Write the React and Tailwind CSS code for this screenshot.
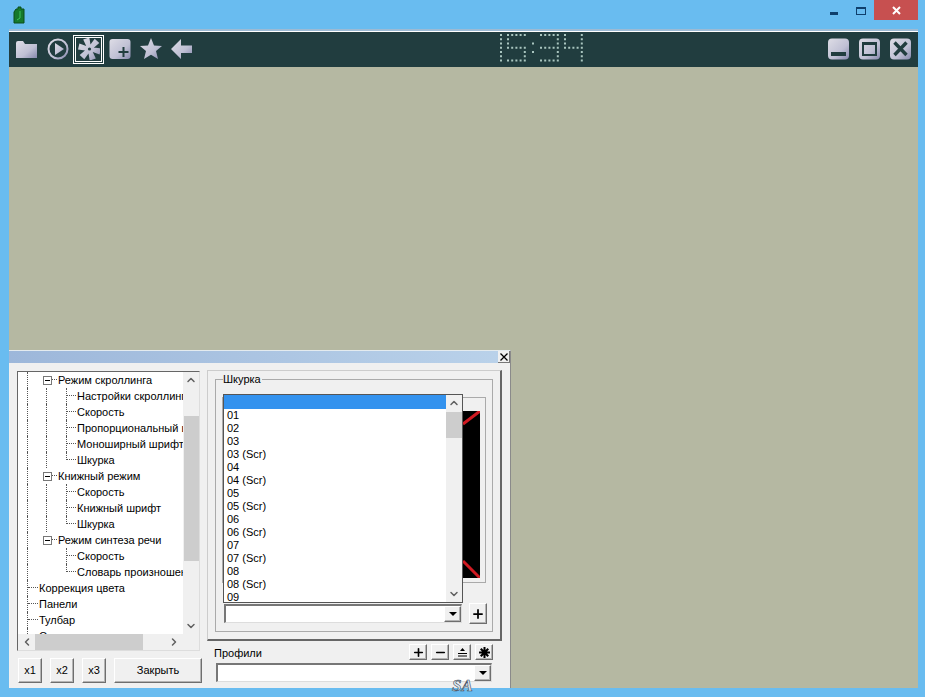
import React from 'react';
import { ChevronUp, ChevronDown, ChevronLeft, ChevronRight, Plus, Minus } from 'lucide-react';

const digitMaps = {
  1: ['1', '1', '1', '1', '1', '1', '1'],
  5: ['11111', '10000', '10000', '11111', '00001', '00001', '11111'],
  3: ['11111', '00001', '00001', '11111', '00001', '00001', '11111'],
  4: ['10001', '10001', '10001', '11111', '00001', '00001', '00001'],
};

const Digit = ({ x, map }) =>
  map.flatMap((row, r) =>
    row.split('').map((c, i) =>
      c === '1' ? <rect key={`${x}-${r}-${i}`} x={x + i * 4.2} y={r * 4.25} width="2" height="2" fill="#a9c5bf" /> : null
    )
  );

const Clock = () => (
  <svg width="90" height="30" viewBox="0 0 90 30" aria-label="15:34" className="ml-[306px] shrink-0">
    <Digit x={1} map={digitMaps[1]} />
    <Digit x={8} map={digitMaps[5]} />
    <rect x="33" y="8.5" width="2" height="2" fill="#a9c5bf" />
    <rect x="33" y="17" width="2" height="2" fill="#a9c5bf" />
    <Digit x={41} map={digitMaps[3]} />
    <Digit x={65} map={digitMaps[4]} />
  </svg>
);

// pinwheel with six slanted blades
const gearPath = (() => {
  const pts = [];
  for (let i = 0; i < 6; i++) {
    const a = ((i * 60 + 14) * Math.PI) / 180;
    const at = (r, d) => `${(11.5 + r * Math.cos(a + d)).toFixed(1)} ${(11 + r * Math.sin(a + d)).toFixed(1)}`;
    pts.push(at(4.5, -0.55), at(11.5, -0.3), at(11.5, 0.26), at(4.5, 0.5));
  }
  return `M${pts.join(' L')} Z`;
})();

const Grad = ({ id }) => (
  <defs>
    <linearGradient id={id} x1="0" y1="0" x2="1" y2="1">
      <stop offset="0" stopColor="#dedde6" />
      <stop offset="0.6" stopColor="#bfc0d4" />
      <stop offset="1" stopColor="#8688ad" />
    </linearGradient>
  </defs>
);

const ToolIcon = ({ id, children, className = '' }) => (
  <svg width="22" height="22" viewBox="0 0 22 22" className={`shrink-0 ${className}`}>
    <Grad id={id} />
    {children}
  </svg>
);

const Raised = ({ className = '', children }) => (
  <div className={`flex items-center justify-center bg-[#f0f0f0] border-r border-b border-[#6e6e6e] border-t border-l border-t-white border-l-white shadow-[inset_-1px_-1px_0_#b4b4b4] text-[11px] text-black ${className}`}>
    {children}
  </div>
);

const Caret = () => (
  <span className="w-0 h-0 border-l-[4px] border-r-[4px] border-t-[4px] border-l-transparent border-r-transparent border-t-black" />
);

const treeRows = [
  { t: 'Режим скроллинга', k: 'parent', g: true },
  { t: 'Настройки скроллинга', k: 'child', g: true },
  { t: 'Скорость', k: 'child', g: true },
  { t: 'Пропорциональный шрифт', k: 'child', g: true },
  { t: 'Моноширный шрифт', k: 'child', g: true },
  { t: 'Шкурка', k: 'last', g: true },
  { t: 'Книжный режим', k: 'parent', g: true },
  { t: 'Скорость', k: 'child', g: true },
  { t: 'Книжный шрифт', k: 'child', g: true },
  { t: 'Шкурка', k: 'last', g: true },
  { t: 'Режим синтеза речи', k: 'parent', g: true },
  { t: 'Скорость', k: 'child', g: false },
  { t: 'Словарь произношения', k: 'last', g: false },
  { t: 'Коррекция цвета', k: 'root' },
  { t: 'Панели', k: 'root' },
  { t: 'Тулбар', k: 'root' },
  { t: 'Статус', k: 'root' },
];

const DOT = 'border-dotted border-[#555]';

const TreeRow = ({ row }) => {
  if (row.k === 'root') {
    return (
      <div className="flex h-4 pl-[9px] items-start">
        <div className={`w-[11px] h-4 border-l ${DOT} shrink-0`}>
          <div className={`h-2 border-b ${DOT}`} />
        </div>
        <span className="pl-px whitespace-nowrap leading-4">{row.t}</span>
      </div>
    );
  }
  if (row.k === 'parent') {
    return (
      <div className="flex h-4 pl-[9px] items-start">
        <div className={`w-4 h-4 border-l ${DOT} shrink-0`} />
        <div className="w-[9px] h-4 shrink-0 flex items-center">
          <div className="w-[9px] h-[9px] border border-[#777] bg-white flex items-center justify-center">
            <div className="w-[5px] h-px bg-black" />
          </div>
        </div>
        <div className={`w-[5px] h-2 border-b ${DOT} shrink-0`} />
        <span className="pl-px whitespace-nowrap leading-4">{row.t}</span>
      </div>
    );
  }
  return (
    <div className="flex h-4 pl-[9px] items-start">
      <div className={`w-[19px] h-4 border-l ${DOT} shrink-0`} />
      <div className={`w-5 h-4 shrink-0 ${row.g ? `border-l ${DOT}` : ''}`} />
      <div className={`w-[10px] shrink-0 border-l ${DOT} ${row.k === 'last' ? 'h-2' : 'h-4'}`}>
        <div className={`h-2 border-b ${DOT}`} />
      </div>
      <span className="pl-px whitespace-nowrap leading-4">{row.t}</span>
    </div>
  );
};

const items = ['01', '02', '03', '03 (Scr)', '04', '04 (Scr)', '05', '05 (Scr)', '06', '06 (Scr)', '07', '07 (Scr)', '08', '08 (Scr)', '09'];

const Combo = ({ className = '' }) => (
  <div className={`flex bg-white border-t-2 border-l-2 border-[#777] border-b border-r border-b-[#ddd] border-r-[#ddd] ${className}`}>
    <div className="flex-1" />
    <Raised className="w-[17px] h-full">
      <Caret />
    </Raised>
  </div>
);

export default function App() {
  return (
    <div className="w-[925px] h-[697px] bg-[#69bcf0] flex flex-col overflow-hidden font-['Liberation_Sans',Arial,sans-serif]">
      {/* title bar */}
      <div className="h-[29px] flex items-start shrink-0">
        <svg width="12" height="18" viewBox="0 0 12 18" className="ml-[13px] mt-[6px]">
          <path d="M3 3 L5 3 L5 1 L8 1 L8 3 L11 3 L11 17 L1 17 L1 6 Z" fill="#16792c" stroke="#0b4f1a" />
          <path d="M7 5 L7 12 L4 14" fill="none" stroke="#3fc45c" />
        </svg>
        <div className="flex-1" />
        <div className="w-2 h-[3px] bg-[#0f3f6c] mt-[12px] mr-[18px]" />
        <div className="w-[10px] h-[8px] border border-t-2 border-[#0f3f6c] mt-[7px] mr-[8px]" />
        <div className="w-[44px] h-5 bg-[#c75050] flex items-center justify-center mr-[7px]">
          <svg width="9" height="9" viewBox="0 0 9 9">
            <path d="M1 1 L8 8 M8 1 L1 8" stroke="#fff" strokeWidth="2" />
          </svg>
        </div>
      </div>

      {/* client */}
      <div className="flex-1 flex flex-col ml-[9px] mr-[7px] mb-[9px] min-h-0 border-t-2 border-[#9dbad3]">
        <div className="h-px bg-white shrink-0" />
        <div className="h-[35px] bg-[#213d3f] flex items-center pl-[7px] pb-px shrink-0">
          <ToolIcon id="g1">
            <path d="M0 5 Q0 3 2 3 L7 3 L9 6 L21 6 L21 20 L0 20 Z" fill="url(#g1)" />
          </ToolIcon>
          <ToolIcon id="g2" className="ml-[9px]">
            <circle cx="11" cy="11" r="9.5" fill="none" stroke="url(#g2)" strokeWidth="2" />
            <path d="M8 5 L17 11 L8 17 Z" fill="url(#g2)" />
          </ToolIcon>
          <div className="ml-[4px] w-[31px] h-[29px] border border-white flex items-center justify-center shrink-0">
            <div className="w-[27px] h-[25px] border border-white flex items-center justify-center">
              <ToolIcon id="g3">
                <path d={gearPath} fill="url(#g3)" />
                <circle cx="11.5" cy="11" r="1.6" fill="#213d3f" />
              </ToolIcon>
            </div>
          </div>
          <ToolIcon id="g4" className="ml-[5px]">
            <rect x="0.5" y="1" width="21" height="20" rx="3" fill="url(#g4)" />
            <path d="M14.5 9 V19 M9.5 14 H19.5" stroke="#213d3f" strokeWidth="2" />
          </ToolIcon>
          <ToolIcon id="g5" className="ml-[9px]">
            <path d="M11 0 L14 7.5 L22 8 L16 13 L18 21 L11 16.8 L4 21 L6 13 L0 8 L8 7.5 Z" fill="url(#g5)" />
          </ToolIcon>
          <ToolIcon id="g6" className="ml-[9px]">
            <path d="M0 11 L10 1 L10 7.5 L21 7.5 L21 15 L10 15 L10 21 Z" fill="url(#g6)" />
          </ToolIcon>
          <Clock />
          <div className="flex-1" />
          <ToolIcon id="g7">
            <rect x="0" y="0.5" width="21" height="21" rx="4" fill="url(#g7)" />
            <rect x="3" y="14" width="15" height="4" fill="#213d3f" />
          </ToolIcon>
          <ToolIcon id="g8" className="ml-[9px]">
            <rect x="0" y="0.5" width="21" height="21" rx="4" fill="url(#g8)" />
            <rect x="4" y="5" width="13" height="12" fill="none" stroke="#213d3f" strokeWidth="2" />
            <rect x="3" y="4" width="15" height="3" fill="#213d3f" />
          </ToolIcon>
          <ToolIcon id="g9" className="ml-[9px] mr-[6px]">
            <rect x="0" y="0.5" width="21" height="21" rx="4" fill="url(#g9)" />
            <path d="M4.5 4.5 L16.5 17 M16.5 4.5 L4.5 17" stroke="#213d3f" strokeWidth="3.4" />
          </ToolIcon>
        </div>

        {/* main area */}
        <div className="flex-1 bg-[#b5b8a2] flex flex-col justify-end min-h-0">
          <div className="relative w-[502px] h-[338px] bg-[#f0f0f0] border-t border-t-[#e4ebef] border-r border-r-[#8a8a8a] flex flex-col text-[11px] text-black">
            <div className="h-[12px] bg-gradient-to-r from-[#9db7da] to-[#bad2ea] flex justify-end shrink-0">
              <div className="w-[12px] h-[12px] bg-[#f0f0f0] border-r border-b border-[#777] flex items-center justify-center">
                <svg width="8" height="8" viewBox="0 0 8 8">
                  <path d="M0.5 0.5 L7.5 7.5 M7.5 0.5 L0.5 7.5" stroke="#000" strokeWidth="1.3" />
                </svg>
              </div>
            </div>

            <div className="flex flex-1 min-h-0">
              {/* left side */}
              <div className="w-[198px] pl-2 pt-2 shrink-0 flex flex-col">
                <div className="w-[183px] h-[280px] border-t border-l border-[#666] border-r border-b border-r-[#ddd] border-b-[#ddd] flex flex-col">
                  <div className="flex flex-1 min-h-0">
                    <div className="flex-1 bg-white overflow-hidden min-w-0">
                      {treeRows.map((row, i) => (
                        <TreeRow key={i} row={row} />
                      ))}
                    </div>
                    <div className="w-4 flex flex-col items-center bg-[#f0f0f0]">
                      <ChevronUp size={12} strokeWidth={3} className="mt-[2px] text-[#606060]" />
                      <div className="w-[15px] h-[145px] bg-[#cdcdcd] mt-[30px]" />
                      <div className="flex-1" />
                      <ChevronDown size={12} strokeWidth={3} className="mb-[2px] text-[#606060]" />
                    </div>
                  </div>
                  <div className="h-4 flex items-center bg-[#f0f0f0] shrink-0">
                    <ChevronLeft size={12} strokeWidth={3} className="ml-[3px] text-[#606060]" />
                    <div className="w-[108px] h-full bg-[#cdcdcd] ml-[2px]" />
                    <ChevronRight size={12} strokeWidth={3} className="ml-[25px] text-[#606060]" />
                  </div>
                </div>
                <div className="flex mt-[7px] pl-px">
                  <Raised className="w-6 h-[25px]">x1</Raised>
                  <Raised className="w-6 h-[25px] ml-2">x2</Raised>
                  <Raised className="w-6 h-[25px] ml-2">x3</Raised>
                  <Raised className="w-[88px] h-[25px] ml-2">Закрыть</Raised>
                </div>
              </div>

              {/* right side */}
              <div className="flex-1 flex flex-col pr-[8px] pt-[7px] min-w-0">
                <div className="h-[271px] border border-[#ccc] border-r-[#666] border-b-[#666] border-r-2 border-b-2 px-[7px] pt-2">
                  <div className="relative h-[253px] border border-[#aaa]">
                    <span className="absolute -top-[7px] left-[7px] bg-[#f0f0f0] pr-px leading-[13px]">Шкурка</span>
                    <div className="relative ml-[6px] mt-[17px] w-[264px] h-[186px] border border-[#aaa] p-[5px] pt-[13px]">
                      <div className="relative w-full h-[167px] bg-black overflow-hidden">
                        <svg width="252" height="167" viewBox="0 0 252 167" className="block">
                          <path d="M235 13 L252 0 M235 150 L252 167" stroke="#d01a22" strokeWidth="3" />
                        </svg>
                      </div>
                    </div>
                    {/* opened list */}
                    <div className="absolute left-[7px] top-[14px] w-[240px] h-[209px] bg-white border border-[#555] flex z-10">
                      <div className="flex-1 leading-[13px] min-w-0">
                        <div className="h-[14px] bg-[#3392ee]" />
                        {items.map((it) => (
                          <div key={it} className="h-[13px] pl-[3px]">{it}</div>
                        ))}
                      </div>
                      <div className="w-[16px] bg-[#f0f0f0] flex flex-col items-center">
                        <ChevronUp size={12} strokeWidth={3} className="mt-[2px] text-[#606060]" />
                        <div className="w-full h-[26px] bg-[#cdcdcd] mt-[3px]" />
                        <div className="flex-1" />
                        <ChevronDown size={12} strokeWidth={3} className="mb-[2px] text-[#606060]" />
                      </div>
                    </div>
                    <div className="flex items-start ml-[8px] mt-[21px]">
                      <Combo className="w-[238px] h-[19px]" />
                      <Raised className="w-[18px] h-[21px] ml-[7px] -mt-px">
                        <Plus size={14} strokeWidth={3} />
                      </Raised>
                    </div>
                  </div>
                </div>

                <div className="flex items-center justify-between h-[16px] mt-[3px] pl-[7px] pr-[9px] shrink-0">
                  <span className="mt-[2px]">Профили</span>
                  <div className="flex gap-1">
                    <Raised className="w-[18px] h-4"><Plus size={13} strokeWidth={3} /></Raised>
                    <Raised className="w-[18px] h-4"><Minus size={13} strokeWidth={3} /></Raised>
                    <Raised className="w-[18px] h-4">
                      <svg width="11" height="10" viewBox="0 0 11 10">
                        <path d="M5.5 1 L8 4 L3 4 Z M1 6 H10 V7 H1 Z M1 8.5 H10 V9.5 H1 Z" fill="#000" />
                      </svg>
                    </Raised>
                    <Raised className="w-[18px] h-4">
                      <svg width="11" height="11" viewBox="0 0 11 11">
                        <path d="M4.5 0 H6.5 V3 L8.5 1 L10 2.5 L8 4.5 H11 V6.5 H8 L10 8.5 L8.5 10 L6.5 8 V11 H4.5 V8 L2.5 10 L1 8.5 L3 6.5 H0 V4.5 H3 L1 2.5 L2.5 1 L4.5 3 Z" fill="#000" />
                      </svg>
                    </Raised>
                  </div>
                </div>
                <Combo className="h-[19px] mt-[3px] ml-[9px] mr-[10px]" />
              </div>
            </div>
            <span className="absolute left-[443px] top-[327px] z-10 font-['Liberation_Serif',serif] italic font-bold text-[17px] leading-[16px] text-[#dfe8ef] [-webkit-text-stroke:0.6px_#3f4f5f]">SA</span>
          </div>
        </div>
      </div>
    </div>
  );
}
